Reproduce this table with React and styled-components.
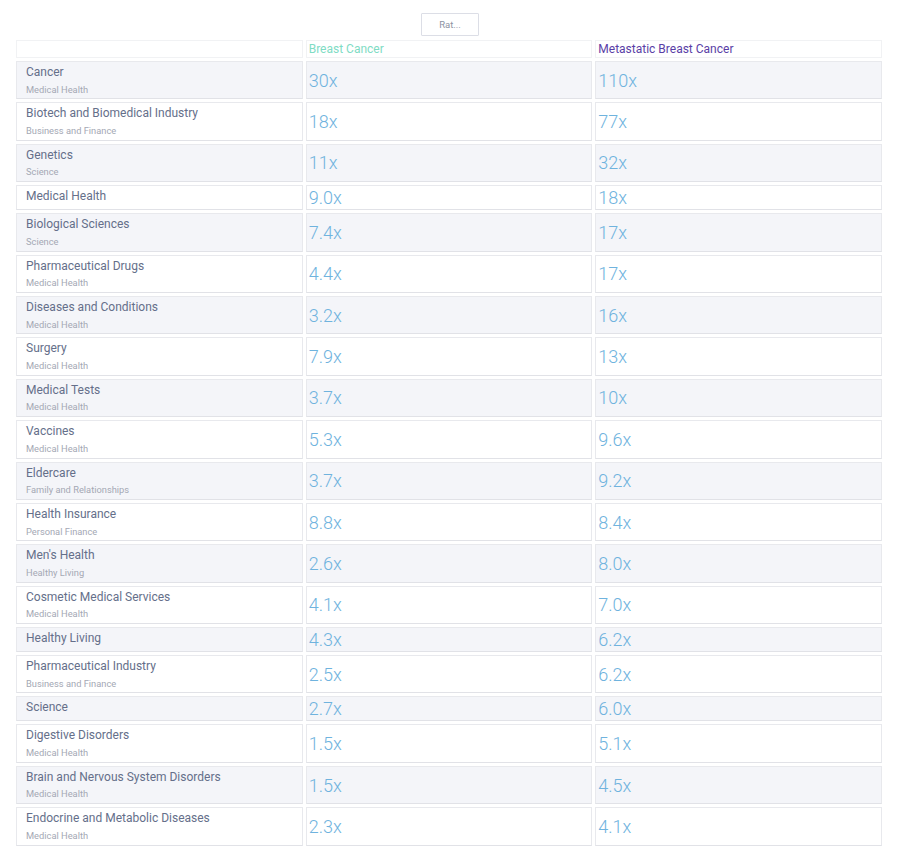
import React from 'react';
import styled, { createGlobalStyle } from 'styled-components';

const GlobalStyle = createGlobalStyle`
  body {
    margin: 0;
    background: #ffffff;
    font-family: Roboto, "Noto Sans", "Liberation Sans", sans-serif;
  }
`;

const Page = styled.div`
  padding-top: 13px;
`;

const Toolbar = styled.div`
  display: flex;
  justify-content: center;
`;

const SortButton = styled.button`
  width: 58px;
  height: 23px;
  background: #ffffff;
  border: 1px solid #dcdee6;
  border-radius: 1px;
  color: #8d93a3;
  font-family: inherit;
  font-size: 9.5px;
  padding: 0;
  cursor: pointer;
`;

const Table = styled.table`
  width: 872px;
  margin: 1px 0 0 13px;
  border-collapse: separate;
  border-spacing: 3px;
  table-layout: fixed;
`;

const HeadCell = styled.th`
  height: 16px;
  padding: 0 2px;
  border: 1px solid #f1f2f4;
  background: #ffffff;
  text-align: left;
  font-weight: 400;
  font-size: 12px;
  line-height: 16px;
  color: ${(p) => p.$color || '#5d6785'};
`;

const Cell = styled.td`
  border: 1px solid #e8e9ed;
  border-bottom-color: #e1e2e7;
  background: ${(p) => (p.$striped ? '#f4f5f9' : '#ffffff')};
  vertical-align: middle;
`;

const LabelCell = styled(Cell)`
  padding: 1px 9px 4px;
  vertical-align: top;
`;

const ValueCell = styled(Cell)`
  padding: 0 2px;
  font-size: 18px;
  font-weight: 300;
  color: #6fb3de;
`;

const Title = styled.div`
  font-size: 12px;
  line-height: 18px;
  color: #656f8a;
`;

const Subtitle = styled.div`
  margin-top: 4.6px;
  font-size: 9.3px;
  line-height: 8.8px;
  color: #a4a8b4;
`;

const rows = [
  ['Cancer', 'Medical Health', '30x', '110x'],
  ['Biotech and Biomedical Industry', 'Business and Finance', '18x', '77x'],
  ['Genetics', 'Science', '11x', '32x'],
  ['Medical Health', null, '9.0x', '18x'],
  ['Biological Sciences', 'Science', '7.4x', '17x'],
  ['Pharmaceutical Drugs', 'Medical Health', '4.4x', '17x'],
  ['Diseases and Conditions', 'Medical Health', '3.2x', '16x'],
  ['Surgery', 'Medical Health', '7.9x', '13x'],
  ['Medical Tests', 'Medical Health', '3.7x', '10x'],
  ['Vaccines', 'Medical Health', '5.3x', '9.6x'],
  ['Eldercare', 'Family and Relationships', '3.7x', '9.2x'],
  ['Health Insurance', 'Personal Finance', '8.8x', '8.4x'],
  ["Men's Health", 'Healthy Living', '2.6x', '8.0x'],
  ['Cosmetic Medical Services', 'Medical Health', '4.1x', '7.0x'],
  ['Healthy Living', null, '4.3x', '6.2x'],
  ['Pharmaceutical Industry', 'Business and Finance', '2.5x', '6.2x'],
  ['Science', null, '2.7x', '6.0x'],
  ['Digestive Disorders', 'Medical Health', '1.5x', '5.1x'],
  ['Brain and Nervous System Disorders', 'Medical Health', '1.5x', '4.5x'],
  ['Endocrine and Metabolic Diseases', 'Medical Health', '2.3x', '4.1x'],
];

export default function App() {
  return (
    <Page>
      <GlobalStyle />
      <Toolbar>
        <SortButton>Rat...</SortButton>
      </Toolbar>
      <Table>
        <thead>
          <tr>
            <HeadCell />
            <HeadCell $color="#7fdcc4">Breast Cancer</HeadCell>
            <HeadCell $color="#5a3ea6">Metastatic Breast Cancer</HeadCell>
          </tr>
        </thead>
        <tbody>
          {rows.map(([title, sub, a, b], i) => {
            const striped = i % 2 === 0;
            return (
              <tr key={title}>
                <LabelCell $striped={striped}>
                  <Title>{title}</Title>
                  {sub && <Subtitle>{sub}</Subtitle>}
                </LabelCell>
                <ValueCell $striped={striped}>{a}</ValueCell>
                <ValueCell $striped={striped}>{b}</ValueCell>
              </tr>
            );
          })}
        </tbody>
      </Table>
    </Page>
  );
}
